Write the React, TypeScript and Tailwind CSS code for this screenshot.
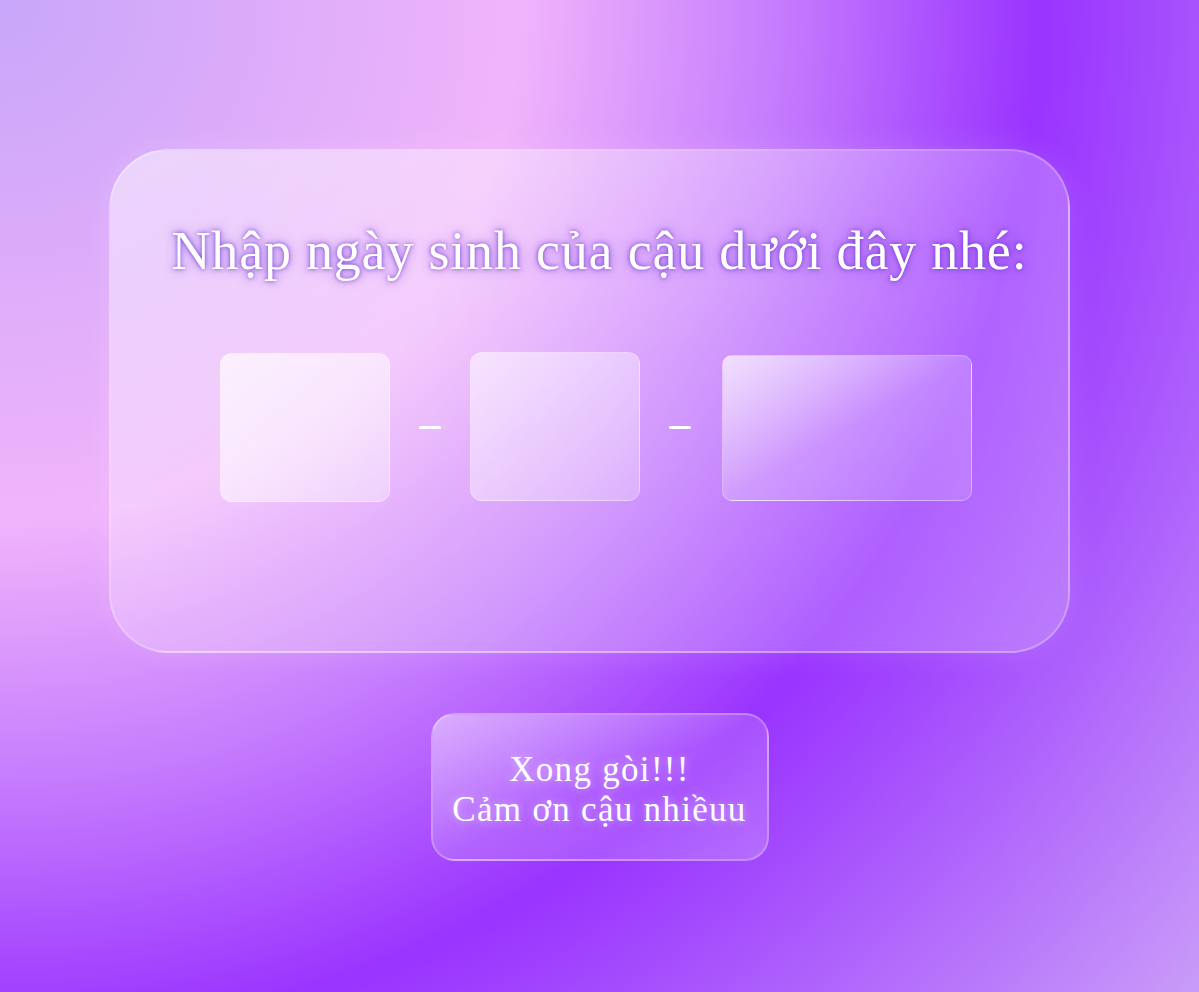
const serif = { fontFamily: '"Liberation Serif", "DejaVu Serif", serif' };

const Dash = () => <div className="w-[22px] h-[3px] bg-white rounded-sm shrink-0" />;

const App = () => {
  return (
    <div
      className="w-[1199px] h-[992px] overflow-hidden flex flex-col items-center bg-[radial-gradient(circle_at_0_0,#c8a6f9_0px,#dcacfa_260px,#f0b4fb_520px,#c67cfd_780px,#9933ff_1040px,#c99cf8_1556px)]"
      style={serif}
    >
      <div className="mt-[149px] mr-[20px] w-[961px] h-[504px] rounded-[60px] border-2 border-white/25 bg-gradient-to-br from-white/50 via-white/25 to-white/20 shadow-[0_0_30px_rgba(255,255,255,0.12)] flex flex-col items-center pt-[68px]">
        <h1 className="ml-[20px] text-white text-[54px] leading-[64px] tracking-[0.8px] [text-shadow:0_0_4px_rgba(100,40,200,0.8),0_0_12px_rgba(120,60,230,0.65)]">
          Nhập ngày sinh của cậu dưới đây nhé:
        </h1>
        <div className="mt-[70px] ml-[12px] flex items-center gap-[29px]">
          <input className="w-[170px] h-[149px] rounded-[12px] border border-white/30 bg-gradient-to-br from-white/70 to-white/35 outline-none" />
          <Dash />
          <input className="w-[170px] h-[149px] -mt-[3px] rounded-[12px] border border-white/30 bg-gradient-to-br from-white/55 to-white/25 outline-none" />
          <Dash />
          <input className="w-[250px] h-[146px] ml-[2px] rounded-[10px] border border-white/30 bg-gradient-to-br from-white/70 via-white/20 to-white/15 outline-none" />
        </div>
      </div>
      <button className="mt-[60px] w-[338px] h-[148px] pt-[6px] rounded-[24px] border-2 border-white/25 bg-gradient-to-br from-white/45 via-white/15 to-white/20 text-white text-[35px] leading-[40px] tracking-[1.3px] [text-shadow:0_0_8px_rgba(255,255,255,0.45)]">
        Xong gòi!!!
        <br />
        Cảm ơn cậu nhiềuu
      </button>
    </div>
  );
};

export default App;
